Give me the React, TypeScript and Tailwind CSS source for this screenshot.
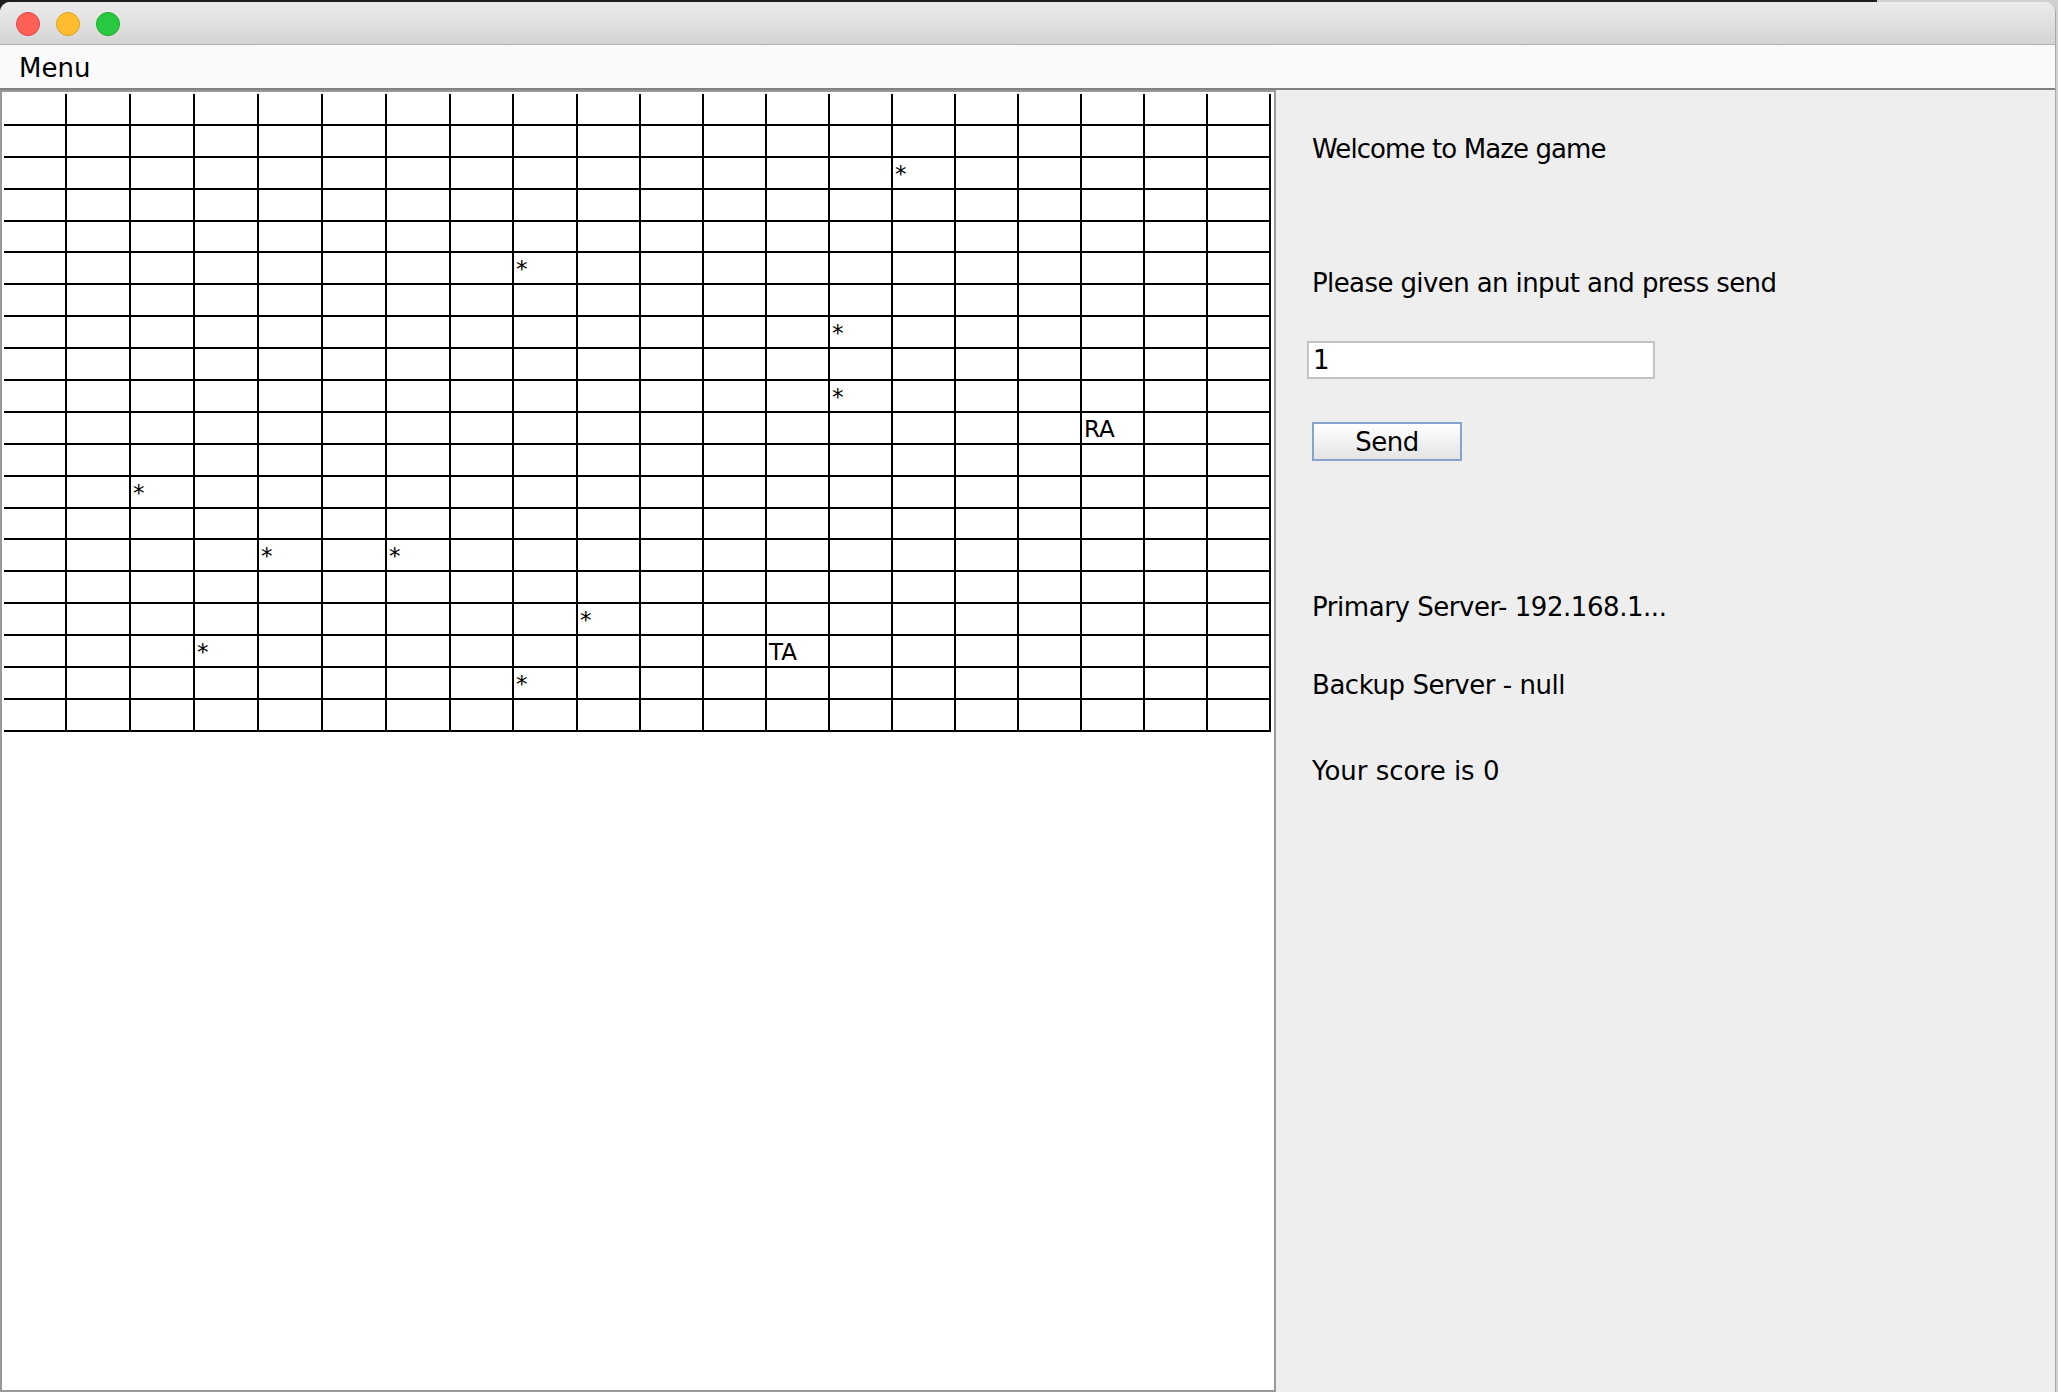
import React from 'react';

const ROWS = 20;
const COLS = 20;

// row-col -> text shown in that cell
const marks: Record<string, string> = {
  '2-14': '*',
  '5-8': '*',
  '7-13': '*',
  '9-13': '*',
  '10-17': 'RA',
  '12-2': '*',
  '14-4': '*',
  '14-6': '*',
  '16-9': '*',
  '17-3': '*',
  '17-12': 'TA',
  '18-8': '*',
};

function MazeGrid() {
  const cells = [];
  for (let r = 0; r < ROWS; r++) {
    for (let c = 0; c < COLS; c++) {
      cells.push(
        <div
          key={`${r}-${c}`}
          className="h-[31.9px] overflow-hidden whitespace-nowrap border-r-2 border-b-2 border-black pl-[2px] pt-[3px] text-[23px] leading-[27px]"
        >
          {marks[`${r}-${c}`] ?? ''}
        </div>
      );
    }
  }
  return (
    <div className="grid w-[1267px] grid-cols-[63px_64px_64px_64px_64px_64px_64px_63px_64px_63px_63px_63px_63px_63px_63px_63px_63px_63px_63px_63px]">
      {cells}
    </div>
  );
}

function TitleBar() {
  return (
    <div className="flex h-[43px] items-center gap-[16px] border-b border-[#b3b3b3] bg-gradient-to-b from-[#ececec] to-[#d4d4d4] pl-[16px] pt-[1px]">
      <span className="h-[24px] w-[24px] rounded-full border border-[#e0443e] bg-[#fe5f57]" />
      <span className="h-[24px] w-[24px] rounded-full border border-[#dea123] bg-[#febc2e]" />
      <span className="h-[24px] w-[24px] rounded-full border border-[#1aab29] bg-[#28c840]" />
    </div>
  );
}

export default function App() {
  return (
    <div className="h-[1392px] w-[2058px] overflow-hidden bg-[linear-gradient(to_right,#1d1d1d_1877px,#d2d2d2_1877px)] pt-[2px] font-['DejaVu_Sans',sans-serif] text-black">
      <div className="flex h-[1390px] w-[2056px] flex-col overflow-hidden rounded-t-[10px] border-r border-[#a8a8a8] bg-[#eeeeee]">
        <TitleBar />

        <div className="h-[45px] border-b-2 border-[#808080] bg-[#fafafa] pl-[19px] pt-[8px] text-[26px] leading-[30px]">
          Menu
        </div>

        <div className="flex flex-1">
          <div className="w-[1276px] border-2 border-[#999999] bg-white pl-[2px] pt-[2px]">
            <MazeGrid />
          </div>

          <div className="flex flex-1 flex-col items-start pl-[36px] pt-[44px] text-[26px] leading-[30px]">
            <div className="tracking-[-0.9px]">Welcome to Maze game</div>
            <div className="mt-[104px] tracking-[-0.6px]">Please given an input and press send</div>
            <input
              defaultValue="1"
              className="ml-[-5px] mt-[43px] h-[38px] w-[348px] border-2 border-[#c3c3c3] bg-white px-[4px] text-[26px] leading-[30px] outline-none"
            />
            <button className="mt-[43px] h-[39px] w-[150px] border-2 border-[#86a3cb] bg-gradient-to-b from-white to-[#e4e4e4] text-[26px] leading-[30px] tracking-[-0.5px]">
              Send
            </button>
            <div className="mt-[131px] tracking-[-0.45px]">Primary Server- 192.168.1...</div>
            <div className="mt-[48px] tracking-[-0.45px]">Backup Server - null</div>
            <div className="mt-[56px]">Your score is 0</div>
          </div>
        </div>
      </div>
    </div>
  );
}
